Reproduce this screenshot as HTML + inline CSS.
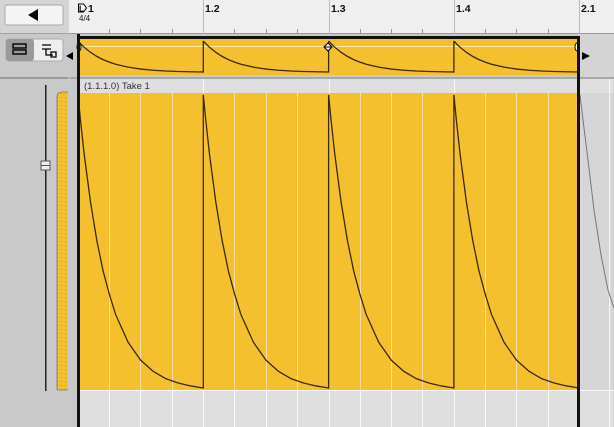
<!DOCTYPE html><html><head><style>
body{margin:0;width:614px;height:427px;overflow:hidden;background:#c9c9c9;font-family:"Liberation Sans",sans-serif;position:relative}
.a{position:absolute}
</style></head><body>
<svg class="a" style="left:0;top:0" width="614" height="427">
<defs>
<path id="c" d="M0 0 L.02 .087 L.05 .204 L.1 .366 L.15 .496 L.2 .6 L.25 .68 L.3 .749 L.4 .844 L.5 .905 L.6 .943 L.7 .968 L.8 .983 L.9 .993 L1 1 L1 0" fill="none" stroke="#3a2a10" stroke-width="1.3" vector-effect="non-scaling-stroke"/>
<pattern id="dots" width="4" height="4" patternUnits="userSpaceOnUse"><rect width="4" height="4" fill="#f5c02e"/><rect x="1" y="1" width="1" height="1" fill="#c8901c"/></pattern>
</defs>
<!-- left panel -->
<rect x="0" y="0" width="69" height="427" fill="#c9c9c9"/>
<rect x="0" y="0" width="69" height="33" fill="#d4d4d4"/>
<rect x="5" y="5" width="58" height="20" rx="2" fill="#f4f4f4" stroke="#a8a8a8"/>
<polygon points="28,15 38,9 38,21" fill="#000"/>
<rect x="0" y="33" width="69" height="1" fill="#a0a0a0"/>
<rect x="6" y="39" width="57" height="22" rx="3" fill="#eee" stroke="#aaa"/>
<rect x="6" y="39" width="28" height="22" rx="3" fill="#9a9a9a"/>
<rect x="13" y="44" width="13" height="4" fill="none" stroke="#000" stroke-width="1.4"/>
<rect x="13" y="50" width="13" height="4" fill="none" stroke="#000" stroke-width="1.4"/>
<path d="M42 45h9M42 49h9M46 49v6h7M51 52h5v5h-5z" stroke="#000" stroke-width="1.3" fill="none"/>
<rect x="0" y="77" width="69" height="2" fill="#9a9a9a"/>
<rect x="45" y="85" width="1.5" height="306" fill="#222"/>
<rect x="41" y="161" width="9" height="9" fill="#eee" stroke="#555"/>
<path d="M41 165.5h9" stroke="#555"/>
<path d="M62 92 H69 V390 H58 Q57 390 57 388 V97 Q57 92 62 92Z" fill="url(#dots)" stroke="#555" stroke-width=".6"/>
<rect x="68" y="33" width="10" height="394" fill="#c9c9c9"/>
<polygon points="66,56 73,52 73,60" fill="#000"/>
<!-- ruler -->
<rect x="69" y="0" width="545" height="33" fill="#efefef"/>
<rect x="69" y="33" width="545" height="1" fill="#999"/>
<g stroke="#999">
<path d="M109.5 29v4M140.5 29v4M172.5 29v4M234.5 29v4M266.5 29v4M297.5 29v4M360.5 29v4M391.5 29v4M422.5 29v4M485.5 29v4M516.5 29v4M548.5 29v4"/>
<path d="M203.5 0v34M329.5 0v34M454.5 0v34M579.5 0v34" stroke="#bbb"/>
</g>
<g font-size="10.5" font-weight="bold" fill="#111">
<text x="88" y="12">1</text><text x="205" y="12">1.2</text><text x="331" y="12">1.3</text><text x="456" y="12">1.4</text><text x="581" y="12">2.1</text>
</g>
<text x="79" y="21" font-size="8" fill="#111">4/4</text>
<path d="M78.5 4h5l3 4-3 4h-5z" fill="#fff" stroke="#000"/><text x="79" y="11.5" font-size="8" font-weight="bold">L</text>
<!-- clip strip -->
<rect x="78" y="34" width="536" height="43" fill="#c9c9c9"/>
<rect x="578" y="34" width="36" height="43" fill="#d4d4d4"/>
<rect x="78" y="37" width="501" height="38" fill="#f5c02e"/>
<rect x="78" y="36" width="501" height="3" fill="#111"/>
<rect x="78" y="46" width="501" height="1" fill="#fbe7a8"/>
<g transform="translate(78,41) scale(125.3,31)"><use href="#c"/><use href="#c" x="1"/><use href="#c" x="2"/><use href="#c" x="3"/></g>
<path d="M324 47l4-4 4 4-4 4z" fill="#fff" stroke="#000"/>
<path d="M325 47h6" stroke="#000"/>
<ellipse cx="79" cy="47" rx="2" ry="4" fill="#fff" stroke="#000"/>
<ellipse cx="577" cy="47" rx="2" ry="4" fill="#fff" stroke="#000"/>
<polygon points="582,52 590,56 582,60" fill="#000"/>
<rect x="69" y="77" width="545" height="2" fill="#a8a8a8"/>
<!-- header -->
<rect x="78" y="79" width="536" height="14" fill="#dfdfdf"/>
<text x="84" y="89" font-size="9.5" fill="#333">(1.1.1.0) Take 1</text>
<!-- main -->
<rect x="78" y="93" width="536" height="334" fill="#dedede"/>
<rect x="78" y="93" width="500" height="297" fill="#f5c02e"/>
<rect x="78" y="390" width="536" height="1" fill="#fafafa"/>
<rect x="578" y="93" width="36" height="297" fill="#d6d6d6"/>
<g stroke="#fbe0a0" stroke-width="1">
<path d="M109.5 93v297M140.5 93v297M172.5 93v297M234.5 93v297M266.5 93v297M297.5 93v297M360.5 93v297M391.5 93v297M422.5 93v297M485.5 93v297M516.5 93v297M548.5 93v297"/>
</g>
<g stroke="#fff" stroke-width="1" opacity=".8">
<path d="M109.5 391v36M140.5 391v36M172.5 391v36M203.5 391v36M234.5 391v36M266.5 391v36M297.5 391v36M329.5 391v36M360.5 391v36M391.5 391v36M422.5 391v36M454.5 391v36M485.5 391v36M516.5 391v36M548.5 391v36M203.5 79v14M329.5 79v14M454.5 79v14M609.5 79v348"/>
</g>
<g transform="translate(78,95) scale(125.3,293)"><use href="#c"/><use href="#c" x="1"/><use href="#c" x="2"/><use href="#c" x="3"/></g>
<path d="M580 95 L583 120 L588 160 L594 210 L601 255 L608 290 L614 308" fill="none" stroke="#777" stroke-width="1"/>
<rect x="77" y="34" width="3" height="393" fill="#111"/>
<rect x="577" y="36" width="3" height="391" fill="#111"/>
</svg>
</body></html>
